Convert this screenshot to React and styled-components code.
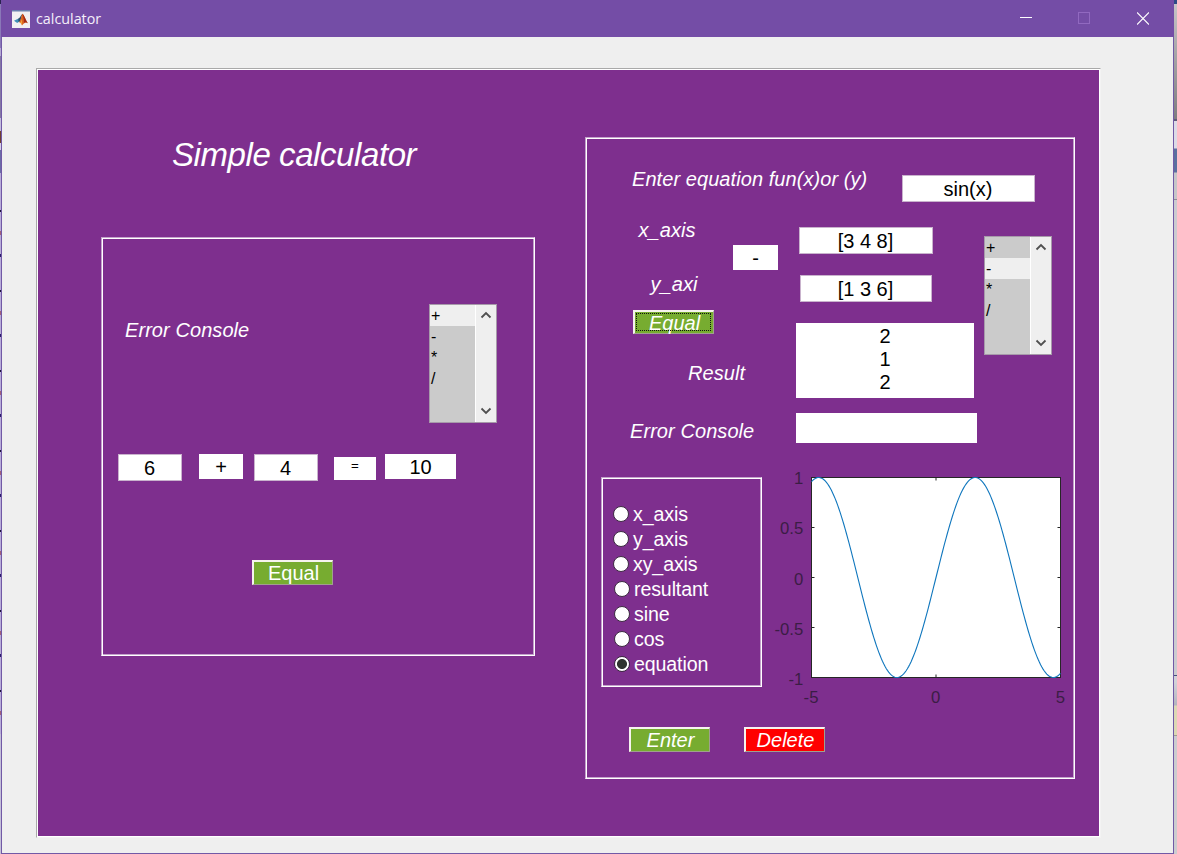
import React from "react";
import styled, { createGlobalStyle, css } from "styled-components";

const GlobalStyle = createGlobalStyle`
  *, *::before, *::after { box-sizing: border-box; }
  html, body { margin: 0; padding: 0; overflow: hidden; }
  body { font-family: "Liberation Sans", Arial, sans-serif; font-size: 20px; color: #000; }
`;

const PURPLE = "#7e2f8e";

const Desktop = styled.div`
  width: 1177px;
  height: 854px;
  display: grid;
  grid-template-columns: 1px 1173px 3px;
  overflow: hidden;
`;

const LeftEdge = styled.div`
  background:
    repeating-linear-gradient(
      to bottom,
      transparent 0 18px, #1d1538 18px 20px, transparent 20px 39px,
      #a0607a 39px 43px, transparent 43px 62px, #2b1d6b 62px 65px,
      transparent 65px 80px
    ) 0 192px / 1px 535px no-repeat,
    linear-gradient(
      to bottom,
      #2a2350 0 4px, #8a78b8 4px 48px, #b6aad4 48px 56px, #8478a4 56px 118px,
      #c4bedd 118px 131px, #70402f 131px 143px, #d6d0ea 143px 150px,
      #6b6ca6 150px 173px, #b9add9 173px 734px, #c4c0d8 734px
    );
`;

const RightEdge = styled.div`
  background: linear-gradient(
    to bottom,
    #2e4a86 0 4px, #c6c4c6 4px, #7f7d80 119px, #5f5a78 119px 121px,
    #dcdbe6 121px 148px, #5b6f9f 149px 172px, #c6c6c8 173px 199px,
    #8d8d95 199px 200px, #cbcbd0 200px 675px, #45507c 675px 676px,
    #d2d2d8 676px 682px, #b4b4be 705px, #dcd8b4 706px 735px,
    #a09c90 735px 736px, #cccccf 736px
  );
`;

const Window = styled.div`
  display: flex;
  flex-direction: column;
  height: 854px;
  background: #efefef;
  border: solid #7159a6;
  border-width: 0 1px 1px;
`;

const TitleBar = styled.header`
  display: flex;
  align-items: center;
  flex: 0 0 37px;
  margin: 0 -1px;
  padding: 0 0 0 11px;
  background: #744da6;
  color: #f4effa;
  font: 14.3px "Open Sans", "Noto Sans", sans-serif;
  svg { display: block; }
`;

const Title = styled.span`
  margin-left: 6px;
  flex: 1;
`;

const Controls = styled.div`
  display: flex;
  gap: 46px;
  margin-right: 25px;
  svg:last-child { margin-left: 1px; }
`;

const MainPanel = styled.main`
  display: grid;
  grid-template-columns: 548px 490px;
  width: 1065px;
  height: 770px;
  margin: 31px 0 0 34px;
  background: ${PURPLE};
  border: 1px solid #a9a9a9;
  border-right-color: #f3f3f3;
  border-bottom-color: #f3f3f3;
  box-shadow: inset 1px 1px #fff, inset -1px -1px #fff;
`;

const etched = css`
  border: 1px solid;
  border-color: #c3a2ca #fff #fff #c3a2ca;
  box-shadow: inset 1px 1px #fff, inset -1px -1px #c3a2ca;
  padding: 1px;
`;

const LeftSide = styled.div`
  padding-left: 64px;
`;

const Heading = styled.h1`
  margin: 66px 0 62px 71px;
  font-size: 33px;
  line-height: 40px;
  font-weight: 400;
  font-style: italic;
  color: #fff;
  letter-spacing: -0.42px;
`;

const Frame = styled.section`
  ${etched}
  width: ${(p) => p.$w}px;
  height: ${(p) => p.$h}px;
  margin-top: ${(p) => p.$top || 0}px;
`;

const Row = styled.div`
  display: flex;
  align-items: flex-start;
  padding-left: ${(p) => p.$left || 0}px;
  margin-top: ${(p) => p.$top || 0}px;
  height: ${(p) => (p.$h ? `${p.$h}px` : "auto")};
  gap: ${(p) => p.$gap || 0}px;
`;

const Column = styled.div`
  display: flex;
  flex-direction: column;
  align-items: flex-start;
  flex: none;
  width: ${(p) => p.$w}px;
  padding-top: ${(p) => p.$top || 0}px;
`;

const Label = styled.div`
  flex: none;
  width: ${(p) => (p.$w ? `${p.$w}px` : "auto")};
  margin: ${(p) => p.$top || 0}px 0 0 ${(p) => p.$left || 0}px;
  line-height: 24px;
  height: 24px;
  font-style: italic;
  letter-spacing: 0.07px;
  color: #fff;
  white-space: nowrap;
`;

const Field = styled.div`
  flex: none;
  width: ${(p) => p.$w}px;
  height: ${(p) => p.$h || 27}px;
  margin: ${(p) => p.$top || 0}px 0 0 ${(p) => p.$left || 0}px;
  border: 1px solid #c9b3cd;
  background: #fff;
  text-align: center;
  line-height: 26px;
  white-space: nowrap;
  padding-right: 1px;
`;

const Readout = styled(Field)`
  border: 0;
  padding-right: 0;
  font-size: ${(p) => p.$size || 20}px;
  line-height: ${(p) => p.$lh || 26}px;
  padding-top: ${(p) => p.$pad || 0}px;
`;

const Button = styled.button`
  flex: none;
  display: block;
  width: ${(p) => p.$w || 81}px;
  height: ${(p) => p.$h || 25}px;
  margin: ${(p) => p.$top || 0}px 0 0 ${(p) => p.$left || 0}px;
  padding: 0 0 0 1px;
  border: solid;
  border-width: 2px 1px 1px 2px;
  border-color: #f6f3ee #a0a08e #a0a08e #f6f3ee;
  background: ${(p) => (p.$danger ? "#ff0000" : "#77ac30")};
  color: #fff;
  font: ${(p) => (p.$plain ? "normal" : "italic")} 20px/22px "Liberation Sans", Arial, sans-serif;
  ${(p) => p.$focused && "outline: 1px dotted #111; outline-offset: -4px;"}
`;

const ListFrame = styled.div`
  flex: none;
  display: grid;
  grid-template-columns: 45px 21px;
  width: 68px;
  height: 119px;
  border: 1px solid #a79aaa;
  background: #cbcbcb;
  font-size: 16px;
`;

const Option = styled.div`
  height: 21px;
  line-height: 21px;
  padding-left: 1px;
  color: #000;
  background: ${(p) => (p.$selected ? "#efefef" : "transparent")};
`;

const ScrollBar = styled.div`
  display: flex;
  flex-direction: column;
  justify-content: space-between;
  align-items: center;
  padding: 6px 0 7px;
  background: #efefef;
  border-left: 1px solid #fff;
  svg { display: block; }
`;

const RadioGroup = styled(Frame)`
  flex: none;
  padding: 24px 0 0 11px;
`;

const RadioRow = styled.label`
  display: flex;
  align-items: center;
  height: 25px;
  padding-left: ${(p) => p.$shift || 0}px;
  color: #fff;
  font-size: 19.6px;
  letter-spacing: -0.12px;
  line-height: 25px;
`;

const RadioDot = styled.span`
  width: 16px;
  height: 16px;
  margin: -2px 4px 0 0;
  border: 1px solid #3d2b42;
  border-radius: 50%;
  background: ${(p) =>
    p.$checked ? "radial-gradient(circle, #2f332f 0 4.6px, #fff 5.4px)" : "#fff"};
`;

const PlotSvg = styled.svg`
  display: block;
  flex: none;
  font-family: "Liberation Sans", Arial, sans-serif;
  font-size: 16.7px;
  fill: #3b1d45;
`;

const OPERATORS = ["+", "-", "*", "/"];

function Chevron({ up }) {
  return (
    <svg width="12" height="8" viewBox="0 0 12 8">
      <path
        d={up ? "M1.5 6.5 L6 2 L10.5 6.5" : "M1.5 1.5 L6 6 L10.5 1.5"}
        fill="none"
        stroke="#505050"
        strokeWidth="1.8"
      />
    </svg>
  );
}

function OperatorList({ selected }) {
  return (
    <ListFrame>
      <div>
        {OPERATORS.map((op) => (
          <Option key={op} $selected={op === selected}>{op}</Option>
        ))}
      </div>
      <ScrollBar>
        <Chevron up />
        <Chevron />
      </ScrollBar>
    </ListFrame>
  );
}

function MatlabIcon() {
  return (
    <svg width="18" height="18" viewBox="0 0 18 18">
      <rect width="18" height="18" fill="#f1f0f2" />
      <rect width="18" height="1.5" fill="#6a7fae" />
      <path d="M2 10.8 L6 8.8 L8 11 L5.2 13Z" fill="#3f8fb8" />
      <path d="M6 8.8 C8 8 8.5 5.5 10.3 4 L8.5 10.8 L6.8 12.3Z" fill="#26506e" />
      <path d="M10.3 3.8 C11.6 4 13.5 9.5 15.8 13.2 C14 12 13 12 10 15.4 C9.2 13.5 8.5 12.6 7 12.3 C8.8 11 9.2 6 10.3 3.8Z" fill="#d9601f" />
      <path d="M10.4 3.8 C11.8 4.6 13.5 9.5 15.8 13.2 C14.2 12 13 12 12 12.8 C12 9 11.2 6 10.4 3.8Z" fill="#a12a18" />
      <path d="M8 12.4 C9 11.6 9.6 10 10 8.5 L10.2 15 C9.4 13.6 9 12.8 8 12.4Z" fill="#f0a23a" />
    </svg>
  );
}

function SinePlot() {
  const x0 = 49.5, y0 = 10.5, w = 249, h = 200;
  const points = [];
  for (let i = 0; i <= 200; i++) {
    const x = -5 + i / 20;
    const px = x0 + ((x + 5) / 10) * w;
    const py = y0 + ((1 - Math.sin(x)) / 2) * h;
    points.push(`${px.toFixed(2)},${py.toFixed(2)}`);
  }
  const yTicks = ["1", "0.5", "0", "-0.5", "-1"];
  const xTicks = ["-5", "0", "5"];
  return (
    <PlotSvg width="311" height="243" viewBox="0 0 311 243">
      <rect x={x0} y={y0} width={w} height={h} fill="#fff" stroke="#262626" />
      {yTicks.map((t, i) => (
        <g key={t}>
          <path
            d={`M${x0} ${y0 + i * 50}h3M${x0 + w} ${y0 + i * 50}h-3`}
            stroke="#262626"
          />
          <text x="41.3" y={17.2 + i * 50.2} textAnchor="end">{t}</text>
        </g>
      ))}
      <path
        d={`M${x0 + w / 2} ${y0}v3M${x0 + w / 2} ${y0 + h}v-3`}
        stroke="#262626"
      />
      {xTicks.map((t, i) => (
        <text key={t} x={49 + i * 124.7} y="236" textAnchor="middle">{t}</text>
      ))}
      <polyline points={points.join(" ")} fill="none" stroke="#0f76bd" strokeWidth="1.1" />
    </PlotSvg>
  );
}

const RADIOS = ["x_axis", "y_axis", "xy_axis", "resultant", "sine", "cos", "equation"];

function SimpleCalculator() {
  return (
    <Frame $w={434} $h={419}>
      <Row $left={22} $top={65} $h={119}>
        <Label $top={14} $w={304}>Error Console</Label>
        <OperatorList selected="+" />
      </Row>
      <Row $left={15} $top={31} $h={27}>
        <Field $w={64}>6</Field>
        <Readout $w={44} $h={25} $left={17}>+</Readout>
        <Field $w={64} $left={11}>4</Field>
        <Readout $w={42} $h={23} $left={16} $top={3} $size={13.3} $lh={17}>=</Readout>
        <Readout $w={71} $h={25} $left={9}>10</Readout>
      </Row>
      <Row $left={149} $top={79}>
        <Button $plain>Equal</Button>
      </Row>
    </Frame>
  );
}

function EquationPanel() {
  return (
    <Frame $w={490} $h={642} $top={68}>
      <Row $left={45} $top={28} $h={35}>
        <Label $w={270}>Enter equation fun(x)or (y)</Label>
        <Field $w={133} $top={8}>sin(x)</Field>
      </Row>
      <Row $top={16} $h={259}>
        <Column $w={209}>
          <Row $h={92}>
            <Column $w={146}>
              <Label $left={51.5}>x_axis</Label>
              <Label $left={63.5} $top={30}>y_axi</Label>
            </Column>
            <Readout $w={45} $h={25} $top={27}>-</Readout>
          </Row>
          <Button $left={46} $h={24} $focused>Equal</Button>
          <Label $left={101} $top={27}>Result</Label>
          <Label $left={43} $top={34}>Error Console</Label>
        </Column>
        <Column $w={188} $top={9}>
          <Field $w={134} $left={3}>[3 4 8]</Field>
          <Field $w={132} $left={4} $top={21}>[1 3 6]</Field>
          <Readout $w={178} $h={75} $top={21} $lh={23} $pad={2}>
            <div>2</div>
            <div>1</div>
            <div>2</div>
          </Readout>
          <Readout $w={181} $h={30} $top={15} />
        </Column>
        <Column $w={68} $top={18}>
          <OperatorList selected="-" />
        </Column>
      </Row>
      <Row $left={14} $h={243} $top={-10}>
        <RadioGroup $w={161} $h={210} $top={10}>
          {RADIOS.map((name, i) => (
            <RadioRow key={name} $shift={i > 2 ? 1 : 0}>
              <RadioDot $checked={name === "equation"} />
              {name}
            </RadioRow>
          ))}
        </RadioGroup>
        <SinePlot />
      </Row>
      <Row $left={42} $top={17} $gap={34}>
        <Button>Enter</Button>
        <Button $danger>Delete</Button>
      </Row>
    </Frame>
  );
}

export default function App() {
  return (
    <Desktop>
      <GlobalStyle />
      <LeftEdge />
      <Window>
        <TitleBar>
          <MatlabIcon />
          <Title>calculator</Title>
          <Controls>
            <svg width="12" height="13"><path d="M0 5.5h12" stroke="#fff" /></svg>
            <svg width="12" height="13"><rect x=".5" y=".5" width="11" height="11" fill="none" stroke="#9169c0" /></svg>
            <svg width="12" height="13"><path d="M0 .5L12 12.5M12 .5L0 12.5" stroke="#fff" strokeWidth="1.2" /></svg>
          </Controls>
        </TitleBar>
        <MainPanel>
          <LeftSide>
            <Heading>Simple calculator</Heading>
            <SimpleCalculator />
          </LeftSide>
          <EquationPanel />
        </MainPanel>
      </Window>
      <RightEdge />
    </Desktop>
  );
}
